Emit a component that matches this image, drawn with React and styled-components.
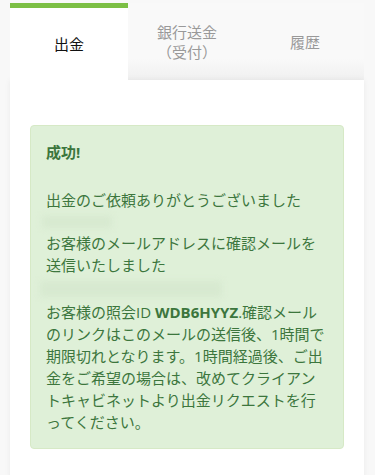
import React from "react";
import styled, { createGlobalStyle } from "styled-components";

const Global = createGlobalStyle`
  html, body { margin: 0; padding: 0; background: #f8f8f8; }
  body { font-family: "Open Sans", "Noto Sans CJK JP", sans-serif; }
`;

const Page = styled.div`
  padding: 3px 11px 0 10px;
  height: 472px;
  overflow: hidden;
`;

const Tabs = styled.div`
  display: grid;
  grid-template-columns: repeat(3, 1fr);
  height: 77px;
`;

const Tab = styled.div`
  display: flex;
  align-items: center;
  justify-content: center;
  text-align: center;
  font-size: 15px;
  line-height: 20px;
  box-sizing: border-box;
  color: ${(p) => (p.$active ? "#111" : "#999")};
  background: ${(p) =>
    p.$active
      ? "#fff"
      : "linear-gradient(to bottom, #f9f9f9 0%, #f9f9f9 72%, #f0f0f0 100%)"};
  border-top: ${(p) => (p.$active ? "5px solid #7cbf45" : "none")};
  padding-bottom: ${(p) => (p.$active ? "1px" : "0")};
  position: relative;
  z-index: ${(p) => (p.$active ? 2 : 0)};
`;

const Panel = styled.div`
  background: #fff;
  padding: 45px 20px 30px 20px;
  box-shadow: 0 0 6px rgba(0, 0, 0, 0.06);
  position: relative;
  z-index: 1;
`;

const Alert = styled.div`
  background: #dff0d8;
  border: 1px solid #d6e9c6;
  border-radius: 4px;
  color: #3c763d;
  padding: 15px;
  font-size: 15px;
  line-height: 22px;
`;

const Title = styled.strong`
  display: block;
  font-weight: 700;
  margin-bottom: 26px;
`;

const Line = styled.div``;

const BlurZone = styled.div`
  height: ${(p) => p.$h}px;
  display: flex;
  align-items: center;
`;

const Blurred = styled.div`
  width: ${(p) => p.$w}px;
  height: ${(p) => p.$bh}px;
  margin-left: ${(p) => p.$ml}px;
  background: #d7e9d0;
  filter: blur(3px);
`;

const Strong = styled.b`
  font-weight: 700;
`;

export default function App() {
  return (
    <>
      <Global />
      <Page>
        <Tabs>
          <Tab $active>出金</Tab>
          <Tab>
            銀行送金
            <br />
            （受付）
          </Tab>
          <Tab>履歴</Tab>
        </Tabs>
        <Panel>
          <Alert>
            <Title>成功!</Title>
            <Line>出金のご依頼ありがとうございました</Line>
            <BlurZone $h={21}>
              <Blurred $w={70} $bh={12} $ml={-4} />
            </BlurZone>
            <Line>
              お客様のメールアドレスに確認メールを
              <br />
              送信いたしました
            </Line>
            <BlurZone $h={25}>
              <Blurred $w={182} $bh={16} $ml={-6} />
            </BlurZone>
            <Line>
              お客様の照会ID <Strong>WDB6HYYZ</Strong>.確認メール
              <br />
              のリンクはこのメールの送信後、1時間で
              <br />
              期限切れとなります。1時間経過後、ご出
              <br />
              金をご希望の場合は、改めてクライアン
              <br />
              トキャビネットより出金リクエストを行
              <br />
              ってください。
            </Line>
          </Alert>
        </Panel>
      </Page>
    </>
  );
}
